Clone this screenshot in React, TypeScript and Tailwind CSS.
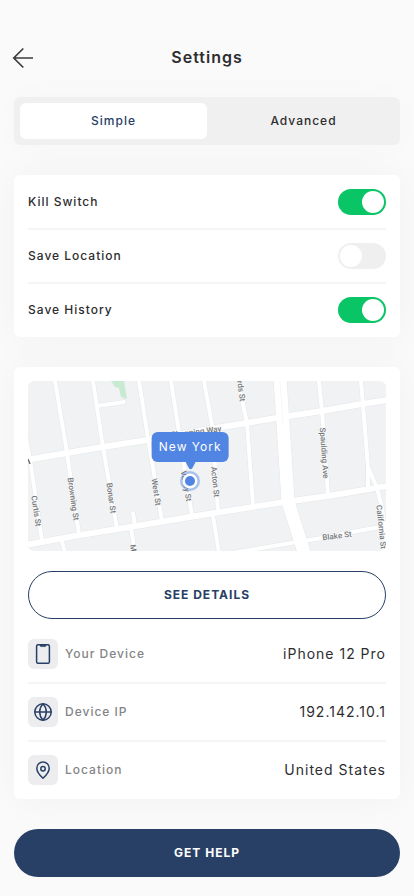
import { useState, type ReactNode } from 'react';

function Toggle({ id, label, initial }: { id: string; label: string; initial: boolean }) {
  const [on, setOn] = useState(initial);
  return (
    <li className="flex items-center justify-between border-b-2 border-[#f5f5f5] py-[13px] last:border-b-0">
      <label htmlFor={id} className="text-xs font-medium text-[#2d2d2f]">
        {label}
      </label>
      <input
        id={id}
        type="checkbox"
        role="switch"
        checked={on}
        onChange={(e) => setOn(e.target.checked)}
        className="flex h-[26px] w-12 cursor-pointer appearance-none items-center rounded-full bg-[#efefef] px-0.5 before:block before:size-[22px] before:rounded-full before:bg-white before:content-[''] checked:justify-end checked:bg-[#09c566]"
      />
    </li>
  );
}

function Detail({ icon, name, value }: { icon: ReactNode; name: string; value: string }) {
  return (
    <div className="flex items-center justify-between border-b-2 border-[#f5f5f5] py-[13px] last:border-b-0">
      <dt className="flex items-center gap-[7px] text-xs font-medium text-[#848486]">
        <span className="flex size-[30px] items-center justify-center rounded-md bg-[#ededf0]">{icon}</span>
        {name}
      </dt>
      <dd className="text-sm text-[#2d2d2f]">{value}</dd>
    </div>
  );
}

const minorRoads = [
  'M-2 58 L2 78 L14 160',
  'M27 0 L39 72 L51 153',
  'M65 0 L75 66 L89 148',
  'M69 25 L96 21',
  'M111 0 L120 57 L134 140',
  'M143 0 L155 77 L164 135',
  'M176 0 L184 44 L190 130',
  'M105 132 L107 145',
  'M103 147 L107 172',
  'M34 160 L37 172',
  'M210 0 L219 42 L225 124',
  'M291 0 L294 30 L300 114',
  'M333 0 L335 24 L340 86 L340 106',
  'M340 86 L349 107 L354 127 L359 165',
  'M185 135 L191 172',
  'M204 172 L269 161 L294 157 L324 151 L358 145',
];

const mainRoads = [
  'M-2 79 L39 72 L75 66 L119 59 L194 46 L219 42 L254 36 L294 30 L334 23 L360 19',
  'M-2 164 L52 154 L102 146 L180 133 L257 121 L300 115 L360 105',
];

const avenue = 'M252 -2 L255 42 L260 121 L277 174';

const streets: { text: string; x: number; y: number; turn: number }[] = [
  { text: 'Curtis St', x: 8, y: 130, turn: 82 },
  { text: 'Browning St', x: 45, y: 118, turn: 82 },
  { text: 'Bonar St', x: 83, y: 117, turn: 82 },
  { text: 'West St', x: 128, y: 111, turn: 82 },
  { text: 'Valley St', x: 158, y: 105, turn: 80 },
  { text: 'M', x: 105, y: 167, turn: 82 },
  { text: 'Acton St', x: 187, y: 101, turn: 84 },
  { text: 'rds St', x: 213, y: 10, turn: 82 },
  { text: 'Spaulding Ave', x: 296, y: 72, turn: 86 },
  { text: 'California St', x: 353, y: 146, turn: 84 },
  { text: 'Blake St', x: 309, y: 155, turn: -7 },
  { text: 'Channing Way', x: 168, y: 51, turn: -7 },
];

function StreetMap() {
  return (
    <svg viewBox="0 0 358 170" className="block w-full rounded-md bg-[#f0f2f4]" role="img" aria-label="Street map">
      <path d="M83 0 L87 6 L91 7 L93 16 L99 18 L96 0Z" fill="#c8ead2" />
      <g fill="none" strokeLinejoin="round" strokeLinecap="round">
        <g stroke="#e4e6e8">
          {minorRoads.map((d) => <path key={d} d={d} strokeWidth="5" />)}
          {mainRoads.map((d) => <path key={d} d={d} strokeWidth="7" />)}
          <path d={avenue} strokeWidth="14" />
        </g>
        <g stroke="#ffffff">
          {minorRoads.map((d) => <path key={d} d={d} strokeWidth="4" />)}
          {mainRoads.map((d) => <path key={d} d={d} strokeWidth="6" />)}
          <path d={avenue} strokeWidth="13" />
        </g>
        <path d="M252 0 L255 42" stroke="#f6f7f8" strokeWidth="1" />
      </g>
      <path d="M0 78 L2 83" stroke="#707275" strokeWidth="1.5" />
      <g className="font-['Roboto',sans-serif] text-[8px] font-medium" fill="#77797c" stroke="#f8f9fa" strokeWidth="1.5" paintOrder="stroke" textAnchor="middle" dominantBaseline="central">
        {streets.map((s) => (
          <text key={s.text} transform={`translate(${s.x} ${s.y}) rotate(${s.turn})`}>
            {s.text}
          </text>
        ))}
      </g>
      <circle cx="162" cy="100" r="10" fill="#5085e3" fillOpacity="0.45" />
      <circle cx="162" cy="100" r="7.5" fill="#ffffff" />
      <circle cx="162" cy="100" r="5" fill="#5085e3" />
    </svg>
  );
}

const iconProps = {
  viewBox: '0 0 20 20',
  fill: 'none',
  stroke: '#284066',
  strokeWidth: 1.5,
  strokeLinecap: 'round' as const,
  strokeLinejoin: 'round' as const,
  className: 'size-5',
  'aria-hidden': true,
};

const PhoneIcon = () => (
  <svg {...iconProps}>
    <rect x="3.6" y="0.7" width="12.8" height="18.6" rx="1.6" />
    <path d="M7 .5h6v1.1a1 1 0 0 1-1 1H8a1 1 0 0 1-1-1z" fill="#284066" strokeWidth=".6" />
  </svg>
);

const GlobeIcon = () => (
  <svg {...iconProps}>
    <circle cx="10" cy="10" r="8.2" />
    <path d="M1.8 10h16.4M10 1.8c2.2 2.3 3.3 5 3.3 8.2s-1.1 5.9-3.3 8.2c-2.2-2.3-3.3-5-3.3-8.2S7.8 4.1 10 1.8z" />
  </svg>
);

const PinIcon = () => (
  <svg {...iconProps}>
    <path d="M10 18.3C7 15.5 3.8 12.3 3.8 8.2a6.2 6.2 0 0 1 12.4 0c0 4.1-3.2 7.3-6.2 10.1z" />
    <circle cx="10" cy="8.8" r="2.2" />
  </svg>
);

export default function App() {
  const [tab, setTab] = useState('Simple');
  return (
    <main className="min-h-screen bg-[#fafafa] px-3.5 pb-[19px] pt-[45px] font-['Inter','Liberation_Sans',sans-serif] tracking-[1px]">
      <header className="grid grid-cols-[20px_1fr_20px] items-center">
        <button type="button" aria-label="Back" className="cursor-pointer">
          <svg viewBox="0 0 20 20" className="block size-5 overflow-visible" fill="none" stroke="#3c3c3f" strokeWidth="1.7">
            <path d="M19 11H0M9.3 1.500-.2 11l9.5 9.5" />
          </svg>
        </button>
        <h1 className="text-center text-base font-semibold leading-6 text-[#2d2d2f]">Settings</h1>
      </header>

      <div role="tablist" className="mt-7 grid grid-cols-2 rounded-md bg-[#f0f0f0] p-1.5 shadow-[0_0_40px_rgba(0,0,0,0.02)]">
        {['Simple', 'Advanced'].map((t) => (
          <button
            key={t}
            type="button"
            role="tab"
            aria-selected={tab === t}
            onClick={() => setTab(t)}
            className="h-9 cursor-pointer rounded-md text-xs font-medium text-[#2d2d2f] last:pl-1.5 aria-selected:bg-white aria-selected:text-[#284066]"
          >
            {t}
          </button>
        ))}
      </div>

      <ul className="mt-[30px] rounded-md bg-white px-3.5 py-px shadow-[0_0_40px_rgba(0,0,0,0.04)]">
        <Toggle id="kill-switch" label="Kill Switch" initial />
        <Toggle id="save-location" label="Save Location" initial={false} />
        <Toggle id="save-history" label="Save History" initial />
      </ul>

      <section className="mt-[30px] rounded-md bg-white px-3.5 pb-px pt-3.5 shadow-[0_0_40px_rgba(0,0,0,0.04)]">
        <div className="relative">
          <div className="tracking-normal">
            <StreetMap />
          </div>
          <div className="absolute left-[45.3%] top-[30%] flex -translate-x-1/2 flex-col items-center">
            <span className="whitespace-nowrap rounded-md bg-[#5085e3] px-[7px] py-[5px] text-xs leading-5 text-white">New York</span>
            <svg viewBox="0 0 10 8" className="block h-2 w-2.5" fill="#5085e3" aria-hidden="true">
              <path d="M0 0h10L6.5 6.5Q5 8 3.5 6.5z" />
            </svg>
          </div>
        </div>
        <button type="button" className="mt-5 block h-12 w-full cursor-pointer rounded-full border border-[#284066] text-xs font-bold text-[#284066]">
          SEE DETAILS
        </button>
        <dl className="mt-[7px]">
          <Detail icon={<PhoneIcon />} name="Your Device" value="iPhone 12 Pro" />
          <Detail icon={<GlobeIcon />} name="Device IP" value="192.142.10.1" />
          <Detail icon={<PinIcon />} name="Location" value="United States" />
        </dl>
      </section>

      <button type="button" className="mt-[30px] block h-12 w-full cursor-pointer rounded-full bg-[#284066] text-xs font-bold text-white">
        GET HELP
      </button>
    </main>
  );
}
